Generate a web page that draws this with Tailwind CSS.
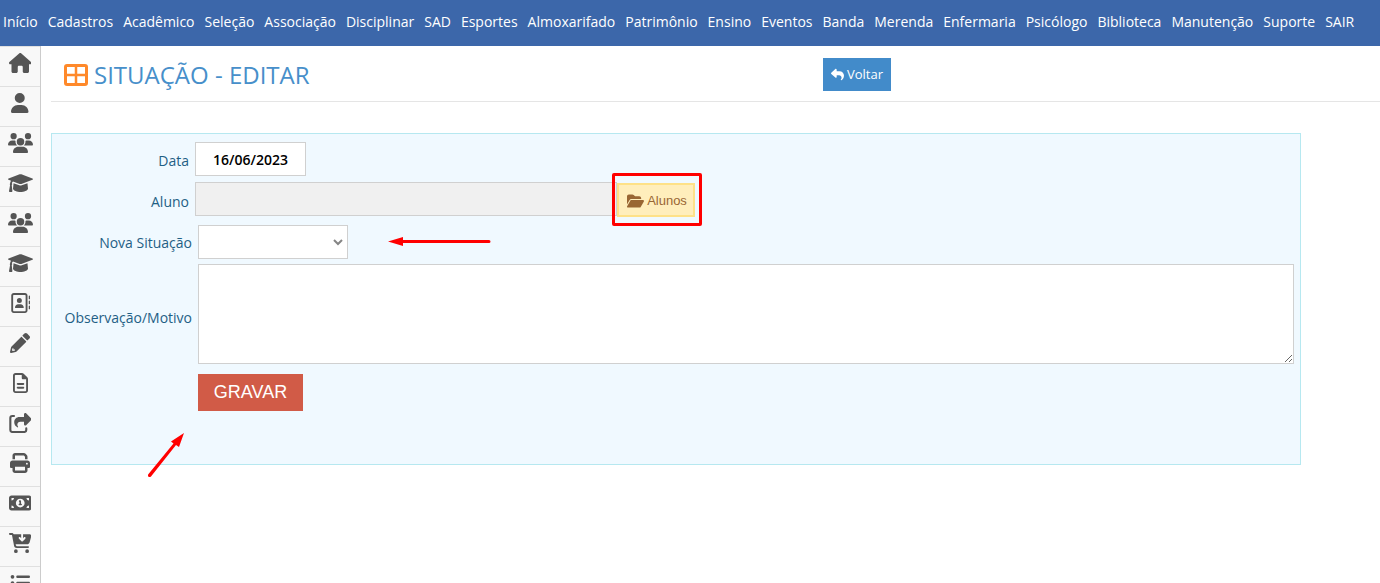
<!DOCTYPE html>
<html lang="pt-BR">
<head>
<meta charset="utf-8">
<meta name="viewport" content="width=device-width, initial-scale=1">
<title>Situação - Editar</title>
<script src="https://cdn.jsdelivr.net/npm/@tailwindcss/browser@4"></script>
</head>
<body class="flex h-screen flex-col overflow-hidden bg-white font-['Open_Sans',sans-serif] text-sm text-[#1f5f85]">

<svg class="hidden" aria-hidden="true">
  <symbol id="users" viewBox="0 0 640 512"><path d="M144 0a80 80 0 1 1 0 160A80 80 0 1 1 144 0zM512 0a80 80 0 1 1 0 160A80 80 0 1 1 512 0zM0 298.700C0 239.800 47.800 192 106.700 192h42.700c15.900 0 31 3.500 44.600 9.700c-1.300 7.200-1.900 14.700-1.900 22.300c0 38.200 16.800 72.500 43.300 96H21.300C9.600 320 0 310.400 0 298.700zM405.300 320h-.7c26.600-23.500 43.300-57.800 43.300-96c0-7.600-.7-15-1.900-22.300c13.600-6.300 28.700-9.700 44.600-9.700h42.700C592.200 192 640 239.800 640 298.700c0 11.800-9.600 21.300-21.300 21.300H405.300zM224 224a96 96 0 1 1 192 0 96 96 0 1 1-192 0zM128 485.300C128 411.700 187.700 352 261.300 352H378.700C452.300 352 512 411.700 512 485.300c0 14.700-11.900 26.700-26.700 26.700H154.700c-14.700 0-26.700-11.900-26.700-26.700z"/></symbol>
  <symbol id="cap" viewBox="0 0 640 512"><path d="M298 35Q320 27 342 35L625 142Q640 148 640 158Q640 168 625 174L342 280Q320 288 298 280L128 217Q104 236 100 262Q112 274 107 292Q103 300 96 306L112 458Q114 482 94 484H44Q22 482 26 458L54 308Q36 286 54 262Q56 226 78 198L15 174Q0 168 0 158Q0 148 15 142zM142 262L288 316Q320 328 352 316L498 262L512 400C500 450 410 484 320 484S140 450 128 400z"/></symbol>
</svg>

<header class="h-[46px] shrink-0 bg-[#3c67aa]">
  <nav aria-label="Menu principal" class="flex gap-x-[10px] px-[3px] pt-3 leading-5 whitespace-nowrap text-white">
    <a href="#">Início</a><a href="#">Cadastros</a><a href="#">Acadêmico</a><a href="#">Seleção</a><a href="#">Associação</a><a href="#">Disciplinar</a><a href="#">SAD</a><a href="#">Esportes</a><a href="#">Almoxarifado</a><a href="#">Patrimônio</a><a href="#">Ensino</a><a href="#">Eventos</a><a href="#">Banda</a><a href="#">Merenda</a><a href="#">Enfermaria</a><a href="#">Psicólogo</a><a href="#">Biblioteca</a><a href="#">Manutenção</a><a href="#">Suporte</a><a href="#">SAIR</a>
  </nav>
</header>

<div class="flex min-h-0 flex-1">
  <aside class="w-[41px] shrink-0 overflow-hidden border-r border-[#ccc] bg-[#f8f8f8] text-[#555] [&_a]:flex [&_a]:h-10 [&_a]:justify-center [&_a]:border-t [&_a]:border-[#e0e0e0] [&_a]:pt-[6px] [&_svg]:h-5 [&_svg]:fill-current">
    <a href="#" aria-label="Início"><svg viewBox="0 0 576 512"><path d="M575.800 255.500c0 18-15 32.100-32 32.100h-32l.7 160.200c0 2.700-.2 5.400-.5 8.100V472c0 22.100-17.900 40-40 40H456c-1.100 0-2.200 0-3.300-.1c-1.400 .1-2.800 .1-4.200 .1H392c-22.100 0-40-17.900-40-40V360c0-17.700-14.300-32-32-32H256c-17.700 0-32 14.300-32 32V472c0 22.100-17.900 40-40 40H104c-22.100 0-40-17.900-40-40V287.600H32c-18 0-32-14-32-32.100c0-9 3-17 10-24L266.400 8c7-7 15-8 22-8s15 2 21 7L564.800 231.500c8 7 12 15 11 24z"/></svg></a>
    <a href="#" aria-label="Usuário"><svg viewBox="0 0 448 512"><path d="M224 256A128 128 0 1 0 224 0a128 128 0 1 0 0 256zm-45.700 48C79.800 304 0 383.800 0 482.300C0 498.700 13.300 512 29.700 512H418.300c16.400 0 29.700-13.300 29.700-29.700C448 383.800 368.200 304 269.700 304H178.300z"/></svg></a>
    <a href="#" aria-label="Turmas"><svg viewBox="0 0 640 512"><use href="#users"/></svg></a>
    <a href="#" aria-label="Alunos"><svg viewBox="0 0 640 512"><use href="#cap"/></svg></a>
    <a href="#" aria-label="Grupos"><svg viewBox="0 0 640 512"><use href="#users"/></svg></a>
    <a href="#" aria-label="Formados"><svg viewBox="0 0 640 512"><use href="#cap"/></svg></a>
    <a href="#" aria-label="Contatos"><svg viewBox="0 0 512 512"><path fill-rule="evenodd" d="M384 48c8.800 0 16 7.200 16 16V448c0 8.800-7.200 16-16 16H96c-8.800 0-16-7.200-16-16V64c0-8.800 7.200-16 16-16H384zM96 0C60.700 0 32 28.700 32 64V448c0 35.300 28.700 64 64 64H384c35.300 0 64-28.700 64-64V64c0-35.300-28.700-64-64-64H96z"/><path d="M240 256a64 64 0 1 0 0-128 64 64 0 1 0 0 128zm-32 32c-44.200 0-80 35.800-80 80c0 8.800 7.200 16 16 16H336c8.800 0 16-7.200 16-16c0-44.200-35.800-80-80-80H208zM512 80c0-8.800-7.200-16-16-16s-16 7.200-16 16v64c0 8.800 7.200 16 16 16s16-7.200 16-16V80zM496 192c-8.800 0-16 7.200-16 16v64c0 8.800 7.200 16 16 16s16-7.200 16-16V208c0-8.800-7.200-16-16-16zm16 144c0-8.800-7.200-16-16-16s-16 7.200-16 16v64c0 8.800 7.200 16 16 16s16-7.200 16-16V336z"/></svg></a>
    <a href="#" aria-label="Editar"><svg viewBox="0 0 512 512"><path fill-rule="evenodd" d="M497.900 142.100l-46.100 46.100c-4.700 4.700-12.300 4.700-17 0l-111-111c-4.700-4.700-4.700-12.300 0-17l46.100-46.100c18.700-18.700 49.100-18.700 67.900 0l60.100 60.100c18.800 18.700 18.800 49.100 0 67.900zM284.200 99.800L40 344Q30 354 26 368L1 480Q-4 516 32 511L144 486Q158 482 168 472L412.300 227.800c4.700-4.700 4.700-12.300 0-17l-111-111c-4.800-4.700-12.400-4.700-17.100 0zM88 424h40v24l-56 14-22-22 14-52H88v36z"/></svg></a>
    <a href="#" aria-label="Documentos"><svg viewBox="0 0 384 512"><path d="M64 464c-8.800 0-16-7.200-16-16V64c0-8.800 7.200-16 16-16H224v80c0 17.700 14.300 32 32 32h80V448c0 8.800-7.200 16-16 16H64zM64 0C28.700 0 0 28.700 0 64V448c0 35.300 28.700 64 64 64H320c35.300 0 64-28.700 64-64V154.500c0-17-6.700-33.300-18.700-45.300L274.700 18.700C262.700 6.700 246.500 0 229.500 0H64zm56 256c-13.300 0-24 10.700-24 24s10.700 24 24 24H264c13.300 0 24-10.700 24-24s-10.700-24-24-24H120zm0 96c-13.300 0-24 10.700-24 24s10.700 24 24 24H264c13.300 0 24-10.700 24-24s-10.700-24-24-24H120z"/></svg></a>
    <a href="#" aria-label="Compartilhar"><svg viewBox="0 0 576 512"><path d="M384 224H290c-45 0-76 32-76 70c0 22 4 34 12 46c6 9 8 14 6 22c-2 8-11 8-18 4C160 336 134 295 134 236c0-76 58-132 130-132H384V34.700C384 15.500 399 0 418 0c8 0 14 3 20 8L564 133c16 14 16 40 0 54L438 312c-6 5-12 8-20 8c-19 0-34-14-34-32z"/><path d="M128 78H86a52 52 0 0 0-52 52V434a52 52 0 0 0 52 52H390a52 52 0 0 0 52-52V394" fill="none" stroke="currentColor" stroke-width="54" stroke-linecap="round"/></svg></a>
    <a href="#" aria-label="Imprimir"><svg viewBox="0 0 512 512"><path d="M128 0C92.700 0 64 28.700 64 64v96h64V64H354.700L384 93.300V160h64V93.300c0-17-6.700-33.300-18.700-45.300L400 18.700C388 6.700 371.700 0 354.700 0H128zM384 352v32 64H128V384 368 352H384zm64 32h32c17.700 0 32-14.300 32-32V256c0-35.300-28.700-64-64-64H64c-35.300 0-64 28.700-64 64v96c0 17.700 14.300 32 32 32H64v64c0 35.300 28.700 64 64 64H384c35.300 0 64-28.700 64-64V384zM432 248a24 24 0 1 1 0 48 24 24 0 1 1 0-48z"/></svg></a>
    <a href="#" aria-label="Financeiro"><svg viewBox="0 0 576 512"><path d="M64 64C28.700 64 0 92.700 0 128V384c0 35.300 28.700 64 64 64H512c35.300 0 64-28.700 64-64V128c0-35.300-28.700-64-64-64H64zm64 320H64V320c35.300 0 64 28.700 64 64zM64 192V128h64c0 35.300-28.700 64-64 64zM448 384c0-35.300 28.700-64 64-64v64H448zm64-192c-35.300 0-64-28.700-64-64h64v64zM176 256a112 112 0 1 1 224 0 112 112 0 1 1-224 0zm76-48c0 9.700 6.900 17.700 16 19.600V276h-4c-11 0-20 9-20 20s9 20 20 20h24 24c11 0 20-9 20-20s-9-20-20-20h-4V208c0-11-9-20-20-20H272c-11 0-20 9-20 20z"/></svg></a>
    <a href="#" aria-label="Compras"><svg viewBox="0 0 576 512"><path d="M24 0C10.700 0 0 10.700 0 24S10.700 48 24 48H69.500c3.800 0 7.100 2.700 7.900 6.500l51.600 271c6.500 34 36.200 58.500 70.700 58.500H488c13.300 0 24-10.700 24-24s-10.700-24-24-24H199.700c-11.500 0-21.400-8.200-23.600-19.500L170.700 288H459.200c32.600 0 61.100-21.800 69.500-53.300l41-152.300C576.600 57 557.400 32 531.100 32H360V134.100l23-23c9.400-9.400 24.600-9.400 33.900 0s9.400 24.600 0 33.900l-64 64c-9.400 9.400-24.600 9.400-33.900 0l-64-64c-9.400-9.400-9.400-24.600 0-33.900s24.600-9.400 33.900 0l23 23V32H120.100C111 12.800 91.600 0 69.500 0H24zM176 512a48 48 0 1 0 0-96 48 48 0 1 0 0 96zm336-48a48 48 0 1 0-96 0 48 48 0 1 0 96 0z"/></svg></a>
    <a href="#" aria-label="Listas"><svg viewBox="0 0 512 512"><path d="M64 144a48 48 0 1 0 0-96 48 48 0 1 0 0 96zM192 64c-17.700 0-32 14.300-32 32s14.300 32 32 32H480c17.700 0 32-14.300 32-32s-14.300-32-32-32H192zm0 160c-17.700 0-32 14.300-32 32s14.300 32 32 32H480c17.700 0 32-14.300 32-32s-14.300-32-32-32H192zM64 304a48 48 0 1 0 0-96 48 48 0 1 0 0 96z"/></svg></a>
  </aside>

  <main class="min-w-0 flex-1 pl-[10px]">
    <div class="grid h-14 grid-cols-[772px_auto] items-start justify-start border-b border-[#e5e5e5]">
      <h1 class="flex items-center gap-[6px] pt-[13px] pl-[13px] text-2xl leading-8 text-[#478fca]">
        <svg class="h-[22px] w-6 text-[#ff892a]" viewBox="0 0 24 22" fill="none" stroke="currentColor"><rect x="1.500" y="1.500" width="21" height="19" rx="1.500" stroke-width="3"/><path d="M12 2v18M2 11h20" stroke-width="2.500"/></svg>
        SITUAÇÃO - EDITAR
      </h1>
      <a href="#" class="mt-3 flex h-[33px] items-center gap-[3px] bg-[#428bca] px-2 text-[13px] text-white">
        <svg class="size-[13px] fill-current" viewBox="0 0 512 512"><path d="M205 34.800c11.500 5.100 19 16.600 19 29.200v64H336c97.200 0 176 78.800 176 176c0 113.300-81.500 163.900-100.200 174.100c-2.500 1.400-5.300 1.900-8.100 1.900c-10.900 0-19.700-8.900-19.700-19.700c0-7.500 4.300-14.400 9.800-19.500c9.400-8.800 22.200-26.400 22.200-56.700c0-53-43-96-96-96H224v64c0 12.600-7.400 24.100-19 29.200s-25 3-34.400-5.400l-160-144C3.900 225.700 0 217.100 0 208s3.900-17.700 10.600-23.800l160-144c9.400-8.500 22.900-10.600 34.400-5.400z"/></svg>
        Voltar
      </a>
    </div>

    <form class="mt-[31px] mr-[79px] border border-[#b6e8f0] bg-[#f0f9ff] pt-2 pr-[6px] pb-[53px]">
      <div class="flex items-center gap-[6px]">
        <label for="data" class="w-[137px] pt-[3px] text-right">Data</label>
        <input id="data" type="text" value="16/06/2023" class="h-[34px] w-[111px] border border-[#d0d0d0] bg-white text-center font-semibold text-black">
      </div>
      <div class="mt-[6px] flex items-center gap-[6px]">
        <label for="aluno" class="w-[137px] pt-1 text-right">Aluno</label>
        <div class="flex items-start">
          <input id="aluno" type="text" readonly class="h-[34px] w-[422px] border border-[#d0d0d0] bg-[#f0f0f0] px-2">
          <div class="relative pt-px">
            <button type="button" class="flex h-[34px] w-[78px] items-center justify-center gap-[3px] border-2 border-[#fee188] bg-[#ffeebc] pt-[2px] pl-[2px] font-['Liberation_Sans',sans-serif] text-[13px] text-[#963]">
              <svg class="h-4 w-[17px] fill-current" viewBox="0 0 576 512"><path d="M88.700 223.800L0 375.800V96C0 60.700 28.700 32 64 32H181.500c17 0 33.300 6.700 45.300 18.700l26.500 26.500c12 12 28.300 18.700 45.300 18.700H416c35.300 0 64 28.700 64 64v32H144c-22.800 0-43.800 12.100-55.300 31.800zm27.600 16.100C122.100 230 132.600 224 144 224H544c11.500 0 22 6.100 27.700 16.100s5.700 22.200-.1 32.100l-112 192C453.900 474 443.400 480 432 480H32c-11.500 0-22-6.100-27.700-16.100s-5.700-22.200 .1-32.100l112-192z"/></svg>
              Alunos
            </button>
            <div class="pointer-events-none absolute -top-[9px] -left-[5px] h-[53px] w-[90px] rounded-[2px] border-3 border-[#f00]"></div>
          </div>
        </div>
      </div>
      <div class="mt-2 flex items-center gap-[6px]">
        <label for="situacao" class="w-[140px] pt-[2px] text-right">Nova Situação</label>
        <div class="relative">
          <select id="situacao" class="block h-[34px] w-[150px] appearance-none border border-[#d0d0d0] bg-white px-2"><option></option></select>
          <svg class="pointer-events-none absolute top-[13px] right-[5px] h-2 w-[10px]" viewBox="0 0 10 8" fill="none" stroke="#858585" stroke-width="2"><path d="M1 2l4 4 4-4"/></svg>
          <svg class="pointer-events-none absolute top-3 left-[190px] h-[9px] w-[103px]" viewBox="0 0 103 9" fill="#f00"><path d="M0 4.500L15 0v3h86a1.500 1.500 0 0 1 0 3H15v3z"/></svg>
        </div>
      </div>
      <div class="mt-[5px] flex items-center gap-[6px]">
        <label for="observacao" class="w-[140px] pt-2 text-right">Observação/Motivo</label>
        <textarea id="observacao" class="block h-[100px] min-w-0 flex-1 resize border border-[#d0d0d0] bg-white p-1"></textarea>
      </div>
      <div class="relative mt-[10px] ml-[146px] w-[105px]">
        <button type="submit" class="block h-[37px] w-full bg-[#d15b47] pb-[2px] font-['Liberation_Sans',sans-serif] text-lg text-white">GRAVAR</button>
        <svg class="pointer-events-none absolute top-[59px] -left-[50px] h-[45px] w-[37px]" viewBox="0 0 37 45" fill="#f00"><path d="M36 0L31 14l-3-2L3 43.500Q1.500 44.500 .3 43.500Q-.5 42.500 .5 41L25.500 10.500L23 8.500z"/></svg>
      </div>
    </form>
  </main>
</div>
</body>
</html>
